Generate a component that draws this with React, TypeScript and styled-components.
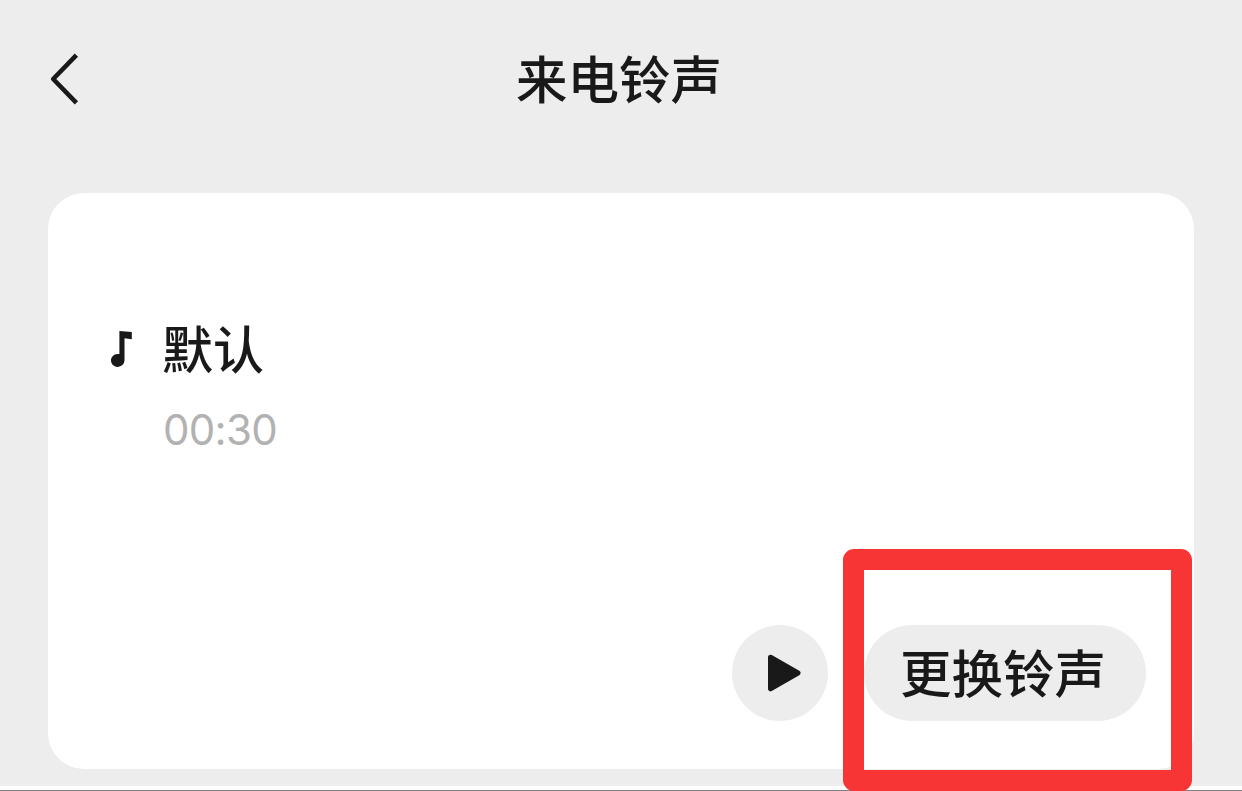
import styled, { createGlobalStyle } from 'styled-components';

const GlobalStyle = createGlobalStyle`
  *, *::before, *::after {
    box-sizing: border-box;
  }

  body {
    margin: 0;
    background-color: #ffffff;
    color: #191919;
    font-family: 'Noto Sans CJK SC', sans-serif;
    overflow: hidden;
  }
`;

const Screen = styled.div`
  position: relative;
  height: 791px;
  padding-bottom: 4px;
  border-bottom: 1px solid #808080;
`;

const Page = styled.main`
  display: flex;
  flex-direction: column;
  height: 786px;
  padding: 0 48px;
  background-color: #ededed;
`;

const Header = styled.header`
  display: grid;
  grid-template-columns: 32px 1fr 32px;
  align-items: center;
  height: 158px;
  margin-bottom: 35px;
`;

const BackButton = styled.button`
  display: flex;
  width: 32px;
  height: 56px;
  padding: 0;
  border: 0;
  background: none;
  cursor: pointer;
`;

const Title = styled.h1`
  margin: 0;
  padding: 0 4px 4px 0;
  font-size: 51.5px;
  font-weight: 500;
  line-height: 76px;
  text-align: center;
`;

const Card = styled.section`
  display: flex;
  flex-direction: column;
  justify-content: space-between;
  height: 576px;
  padding: 116px 48px 48px 60px;
  border-radius: 36px;
  background-color: #ffffff;
`;

const Ringtone = styled.div`
  display: grid;
  grid-template-columns: 54px 1fr;
`;

const NoteIcon = styled.svg`
  margin-top: 20px;
`;

const RingtoneName = styled.div`
  font-size: 51px;
  font-weight: 500;
  line-height: 76px;
`;

const Duration = styled.div`
  grid-column: 2;
  margin-top: 19px;
  padding-left: 1px;
  color: #b2b2b2;
  font-family: Inter, sans-serif;
  font-size: 42px;
  letter-spacing: -0.7px;
  line-height: 52px;
`;

const Actions = styled.div`
  display: flex;
  justify-content: flex-end;
  gap: 36px;
`;

const PlayButton = styled.button`
  width: 96px;
  height: 96px;
  padding: 0;
  border: 0;
  border-radius: 50%;
  background-color: #ededed;
  cursor: pointer;

  svg {
    display: block;
  }
`;

const ChangeButton = styled.button`
  width: 282px;
  height: 96px;
  padding: 0 4px 4px 0;
  border: 0;
  border-radius: 48px;
  background-color: #ededed;
  color: inherit;
  font-family: inherit;
  font-size: 51.5px;
  font-weight: 500;
  line-height: 92px;
  cursor: pointer;
`;

const Highlight = styled.div`
  position: absolute;
  top: 549.4px;
  left: 843.4px;
  width: 348.2px;
  height: 241.2px;
  border: 21px solid #f83535;
  border-radius: 11px;
  pointer-events: none;
`;

export default function App() {
  return (
    <Screen>
      <GlobalStyle />
      <Page>
        <Header>
          <BackButton aria-label="返回">
            <svg width="32" height="56" viewBox="0 0 32 56" fill="none">
              <path d="M28.4 4.2 5.2 28 28.4 51.8" stroke="#191919" strokeWidth="4.6" strokeLinejoin="round" />
            </svg>
          </BackButton>
          <Title>来电铃声</Title>
        </Header>
        <Card>
          <Ringtone>
            <NoteIcon width="28" height="40" viewBox="0 0 28 40">
              <path
                d="M11.4 2 23.8 3V10.2L16.5 9.2V31.2A6.8 6.5 0 1 1 11.4 25.1Z"
                fill="#191919"
              />
            </NoteIcon>
            <RingtoneName>默认</RingtoneName>
            <Duration>00:30</Duration>
          </Ringtone>
          <Actions>
            <PlayButton aria-label="播放">
              <svg width="96" height="96" viewBox="0 0 96 96">
                <path
                  d="M38.5 32.2 66 48 38.5 63.8Z"
                  fill="#191919"
                  stroke="#191919"
                  strokeWidth="5"
                  strokeLinejoin="round"
                />
              </svg>
            </PlayButton>
            <ChangeButton>更换铃声</ChangeButton>
          </Actions>
        </Card>
      </Page>
      <Highlight />
    </Screen>
  );
}
